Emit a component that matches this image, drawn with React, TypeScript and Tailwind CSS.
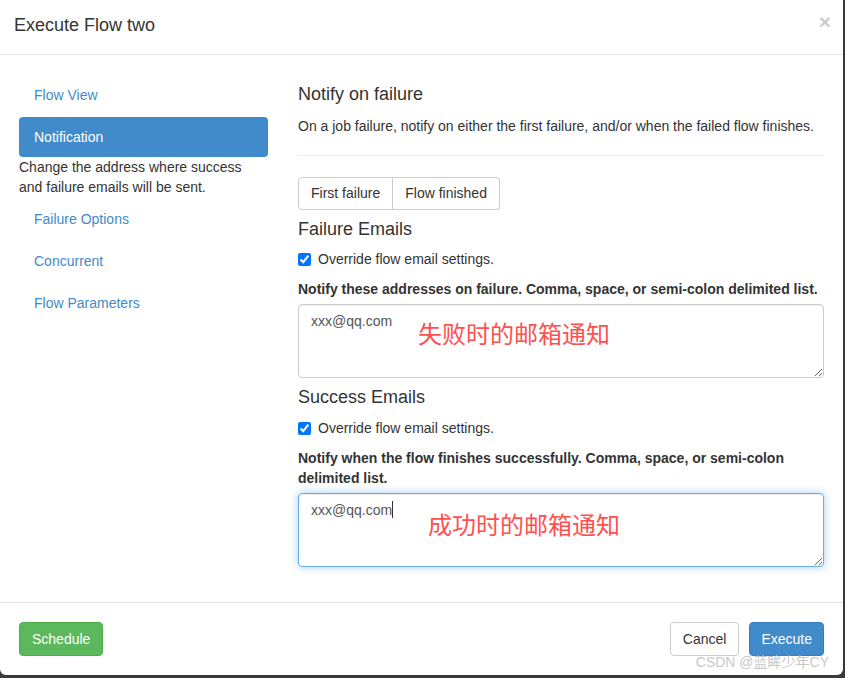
import React from "react";

const font = { fontFamily: '"Liberation Sans", Arial, sans-serif' };

function NavItem({ label, active }: { label: string; active?: boolean }) {
  return (
    <div
      className={
        "h-[40px] px-[15px] flex items-center rounded-[4px] text-[14px] " +
        (active ? "bg-[#428bca] text-white" : "text-[#428bca]")
      }
    >
      {label}
    </div>
  );
}

function Check() {
  return (
    <label className="flex items-center h-[20px] text-[14px] text-[#333]">
      <input
        type="checkbox"
        defaultChecked
        className="w-[13px] h-[13px] m-0 mr-[7px] accent-[#0075ff]"
      />
      Override flow email settings.
    </label>
  );
}

export default function App() {
  return (
    <div className="w-[845px] h-[678px] bg-[#3a3a3a] overflow-hidden" style={font}>
      <div className="relative w-[843px] h-[675px] bg-white rounded-b-[6px] flex flex-col text-[#333]">
        {/* header */}
        <div className="h-[55px] shrink-0 border-b border-[#e5e5e5] flex items-center justify-between pl-[14px] pr-[12px]">
          <div className="text-[18px] text-[#333] leading-[25px] -mt-[4px]">Execute Flow two</div>
          <div className="text-[21px] font-bold text-[#cccccc] leading-none -mt-[12px]">×</div>
        </div>

        {/* body */}
        <div className="flex pl-[19px] pr-[19px] pt-[20px] h-[547px] shrink-0">
          <div className="w-[249px] shrink-0 flex flex-col gap-[2px]">
            <NavItem label="Flow View" />
            <NavItem label="Notification" active />
            <div className="-mt-[2px] text-[14px] leading-[20px] text-[#333] pr-[10px]">
              Change the address where success and failure emails will be sent.
            </div>
            <NavItem label="Failure Options" />
            <NavItem label="Concurrent" />
            <NavItem label="Flow Parameters" />
          </div>

          <div className="ml-[30px] flex-1 flex flex-col">
            <h4 className="mt-[9px] text-[18px] leading-[20px] text-[#333]">Notify on failure</h4>
            <p className="mt-[12px] text-[14px] leading-[20px]">
              On a job failure, notify on either the first failure, and/or when the failed flow finishes.
            </p>
            <div className="mt-[19px] border-t border-[#eeeeee]" />
            <div className="mt-[21px] flex w-max">
              <div className="h-[33px] px-[12px] flex items-center text-[14px] border border-[#cccccc] rounded-l-[4px]">
                First failure
              </div>
              <div className="h-[33px] px-[12px] flex items-center text-[14px] border border-l-0 border-[#cccccc] rounded-r-[4px]">
                Flow finished
              </div>
            </div>
            <h4 className="mt-[9px] text-[18px] leading-[20px]">Failure Emails</h4>
            <div className="mt-[10px]">
              <Check />
            </div>
            <div className="mt-[10px] text-[14px] font-bold leading-[20px]">
              Notify these addresses on failure. Comma, space, or semi-colon delimited list.
            </div>
            <div className="relative mt-[5px]">
              <textarea
                readOnly
                rows={3}
                value="xxx@qq.com"
                className="block w-full h-[74px] px-[12px] py-[6px] text-[14px] leading-[20px] text-[#555] border border-[#cccccc] rounded-[4px] shadow-[inset_0_1px_1px_rgba(0,0,0,0.075)] outline-none resize-y"
                style={font}
              />
              <div
                className="absolute left-[120px] top-[14px] text-[24px] leading-[30px] text-[#ff4f4f] pointer-events-none"
                style={{ fontFamily: '"Noto Sans CJK SC", sans-serif' }}
              >
                失败时的邮箱通知
              </div>
            </div>
            <h4 className="mt-[9px] text-[18px] leading-[20px]">Success Emails</h4>
            <div className="mt-[11px]">
              <Check />
            </div>
            <div className="mt-[10px] text-[14px] font-bold leading-[20px]">
              Notify when the flow finishes successfully. Comma, space, or semi-colon delimited list.
            </div>
            <div className="relative mt-[5px]">
              <textarea
                readOnly
                rows={3}
                value="xxx@qq.com"
                className="block w-full h-[74px] px-[12px] py-[6px] text-[14px] leading-[20px] text-[#555] border border-[#66afe9] rounded-[4px] shadow-[inset_0_1px_1px_rgba(0,0,0,0.075),0_0_8px_rgba(102,175,233,0.6)] outline-none resize-y"
                style={font}
              />
              <div className="absolute left-[94px] top-[8px] w-[1px] h-[17px] bg-[#333]" />
              <div
                className="absolute left-[130px] top-[16px] text-[24px] leading-[30px] text-[#ff4f4f] pointer-events-none"
                style={{ fontFamily: '"Noto Sans CJK SC", sans-serif' }}
              >
                成功时的邮箱通知
              </div>
            </div>
          </div>
        </div>

        {/* footer */}
        <div className="flex-1 border-t border-[#e5e5e5] flex items-start justify-between pl-[19px] pr-[19px] pt-[19px]">
          <div className="h-[34px] px-[12px] flex items-center text-[14px] text-white bg-[#5cb85c] border border-[#4cae4c] rounded-[4px]">
            Schedule
          </div>
          <div className="flex gap-[10px]">
            <div className="h-[34px] px-[12px] flex items-center text-[14px] text-[#333] bg-white border border-[#cccccc] rounded-[4px]">
              Cancel
            </div>
            <div className="h-[34px] px-[11px] flex items-center text-[14px] text-white bg-[#428bca] border border-[#357ebd] rounded-[4px]">
              Execute
            </div>
          </div>
        </div>

        <div
          className="absolute right-[14px] bottom-[6px] text-[14px] leading-[14px] text-[#c8c8c8]"
          style={{ fontFamily: '"Liberation Sans", "Noto Sans CJK SC", sans-serif' }}
        >
          CSDN @蓝眸少年CY
        </div>
      </div>
    </div>
  );
}
